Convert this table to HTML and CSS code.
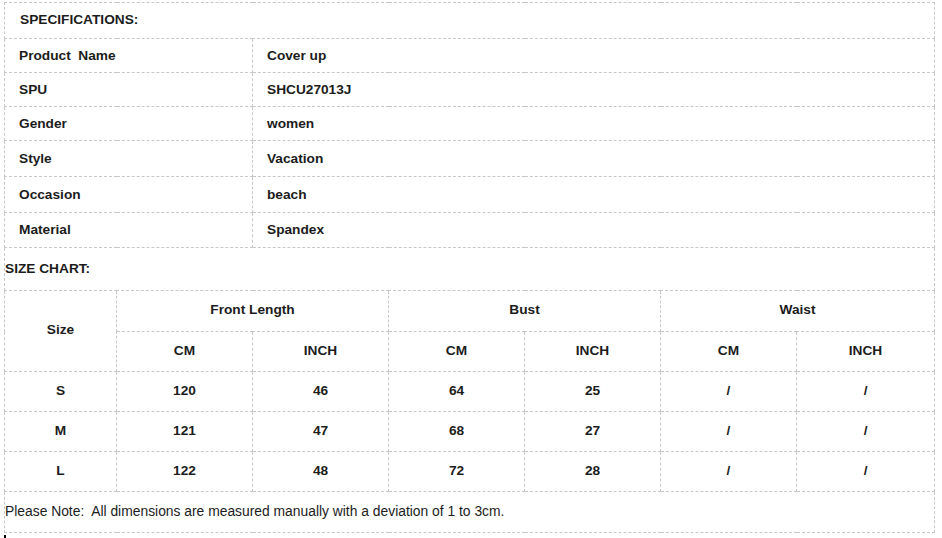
FILE: index.html
```html
<!DOCTYPE html>
<html>
<head>
<meta charset="utf-8">
<link rel="stylesheet" href="styles.css">
</head>
<body>
<table class="sheet">
  <colgroup>
    <col class="c-size">
    <col class="c-val"><col class="c-val"><col class="c-val">
    <col class="c-val"><col class="c-val"><col class="c-last">
  </colgroup>
  <tbody>
    <tr class="h36"><td colspan="7" class="spec-title">SPECIFICATIONS:</td></tr>
    <tr class="h34"><td colspan="2" class="spec">Product&nbsp; Name</td><td colspan="5" class="spec">Cover up</td></tr>
    <tr class="h34"><td colspan="2" class="spec">SPU</td><td colspan="5" class="spec">SHCU27013J</td></tr>
    <tr class="h34"><td colspan="2" class="spec">Gender</td><td colspan="5" class="spec">women</td></tr>
    <tr class="h36"><td colspan="2" class="spec">Style</td><td colspan="5" class="spec">Vacation</td></tr>
    <tr class="h36"><td colspan="2" class="spec">Occasion</td><td colspan="5" class="spec">beach</td></tr>
    <tr class="h35"><td colspan="2" class="spec">Material</td><td colspan="5" class="spec">Spandex</td></tr>
    <tr class="h43"><td colspan="7" class="chart-title">SIZE CHART:</td></tr>
    <tr class="h41"><td rowspan="2" class="c">Size</td><td colspan="2" class="c">Front Length</td><td colspan="2" class="c">Bust</td><td colspan="2" class="c">Waist</td></tr>
    <tr class="h40"><td class="c">CM</td><td class="c">INCH</td><td class="c">CM</td><td class="c">INCH</td><td class="c">CM</td><td class="c">INCH</td></tr>
    <tr class="h40"><td class="c">S</td><td class="c">120</td><td class="c">46</td><td class="c">64</td><td class="c">25</td><td class="c">/</td><td class="c">/</td></tr>
    <tr class="h40"><td class="c">M</td><td class="c">121</td><td class="c">47</td><td class="c">68</td><td class="c">27</td><td class="c">/</td><td class="c">/</td></tr>
    <tr class="h40"><td class="c">L</td><td class="c">122</td><td class="c">48</td><td class="c">72</td><td class="c">28</td><td class="c">/</td><td class="c">/</td></tr>
    <tr class="h41"><td colspan="7" class="note">Please Note:&nbsp; All dimensions are measured manually with a deviation of 1 to 3cm.</td></tr>
  </tbody>
</table>
<div class="mark"></div>
</body>
</html>
```
FILE: styles.css
```css
html, body {
  margin: 0;
  padding: 0;
  background: #fff;
}
body {
  padding: 2px 0 0 4px;
  font-family: "Liberation Sans", Arial, sans-serif;
  color: #1c1c1c;
}
.sheet {
  border-collapse: collapse;
  table-layout: fixed;
  width: 931px;
}
.c-size { width: 112px; }
.c-val { width: 136px; }
.c-last { width: 138px; }
.sheet td {
  border: 1px dashed #c8c8c8;
  padding: 0;
  vertical-align: middle;
  font-size: 13.7px;
  font-weight: bold;
  line-height: 16px;
}
.h34 { height: 34px; }
.h35 { height: 35px; }
.h36 { height: 36px; }
.h40 { height: 40px; }
.h41 { height: 41px; }
.h43 { height: 43px; }
.sheet td.spec { padding-left: 14px; }
.sheet td.spec-title { padding-left: 15px; padding-bottom: 2px; }
.sheet td.chart-title { padding-left: 0; }
.sheet td.c { text-align: center; padding-bottom: 2px; }
.sheet td.note {
  font-weight: normal;
  font-size: 13.85px;
  padding-left: 0;
  padding-bottom: 2px;
}
.mark {
  margin-top: 2px;
  width: 2px;
  height: 4px;
  background: #000;
}
```
